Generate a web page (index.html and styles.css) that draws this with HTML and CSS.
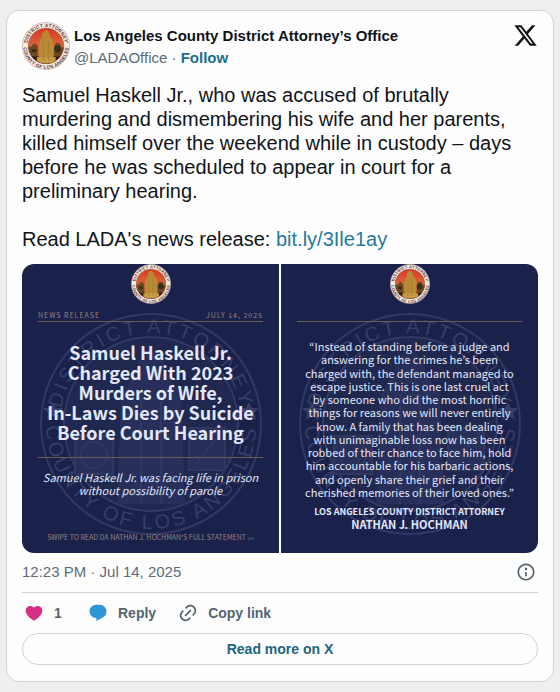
FILE: index.html
```
<!DOCTYPE html>
<html lang="en">
<head>
  <meta charset="UTF-8" />
  <meta name="viewport" content="width=device-width, initial-scale=1.0"/>
  <title>LADAOffice on X</title>
  <link rel="stylesheet" href="styles.css">
</head>
<body>
  <!-- shared seal artwork -->
  <svg class="defs" aria-hidden="true">
    <defs>
      <path id="arc-top" d="M21 100 A79 79 0 0 1 179 100"/>
      <path id="arc-bottom" d="M5 100 A95 95 0 0 0 195 100"/>
      <path id="mark-top" d="M9 100 A91 91 0 0 1 191 100"/>
      <path id="mark-bottom" d="M-5 100 A105 105 0 0 0 205 100"/>
      <linearGradient id="sky" x1="0" y1="0" x2="0" y2="1">
        <stop offset="0" stop-color="#d93a26"/>
        <stop offset="0.5" stop-color="#d9653a"/>
        <stop offset="1" stop-color="#a5622c"/>
      </linearGradient>
      <clipPath id="disc"><circle cx="100" cy="100" r="74"/></clipPath>
      <symbol id="seal" viewBox="0 0 200 200">
        <circle cx="100" cy="100" r="98" fill="#f4ece6" stroke="#c9aa9a" stroke-width="3"/>
        <circle cx="100" cy="100" r="74" fill="url(#sky)"/>
        <g clip-path="url(#disc)">
          <path d="M22 108 L40 100 L52 88 L66 100 L66 152 L22 152Z M134 152 V102 L142 88 L158 90 L164 104 L180 108 V152Z" fill="#6b4a22"/>
          <path d="M20 144 H180 V180 H20Z" fill="#33180f"/>
          <circle cx="148" cy="112" r="14" fill="#3b2b1b"/>
          <path d="M40 112 h20 v14 h-20z" fill="#3f2e18"/>
          <path d="M84 54 Q88 34 100 34 Q112 34 114 54 L118 64 L128 72 L132 104 L128 170 H72 L70 104 L76 72 L84 64Z" fill="#b98a36"/>
          <path d="M62 146 H140 V176 H62Z" fill="#c59b45"/>
          <path d="M90 78 V160 M110 78 V160" stroke="#a87d30" stroke-width="4"/>
        </g>
        <circle cx="100" cy="100" r="74" fill="none" stroke="#7d3a26" stroke-width="2"/>
        <g class="seal-text">
          <text><textPath href="#arc-top" startOffset="50%">DISTRICT ATTORNEY</textPath></text>
          <text><textPath href="#arc-bottom" startOffset="50%">COUNTY OF LOS ANGELES</textPath></text>
        </g>
        <path d="M9 80 l6 3 -5 5z M191 80 l-6 3 5 5z" fill="#b5492f"/>
      </symbol>
      <symbol id="watermark" viewBox="-12 -12 224 224">
        <g fill="none" stroke="#313964" stroke-width="2">
          <circle cx="100" cy="100" r="110"/>
          <circle cx="100" cy="100" r="87" fill="#20284f"/>
        </g>
        <g fill="#272f5a">
          <path d="M84 50 Q88 28 100 28 Q112 28 116 50 L130 70 L134 180 H66 L70 70Z"/>
          <path d="M24 112 H62 V150 H24Z M138 104 H174 V146 H138Z"/>
        </g>
        <g fill="none" stroke="#303862" stroke-width="2">
          <circle cx="43" cy="131" r="13"/>
          <path d="M24 112 H62 V150 H24Z M138 104 H174 V146 H138Z M142 144 L170 108 M90 70 V180 M110 70 V180"/>
        </g>
        <g class="mark-text">
          <text><textPath href="#mark-top" startOffset="50%">DISTRICT ATTORNEY</textPath></text>
          <text><textPath href="#mark-bottom" startOffset="50%">COUNTY OF LOS ANGELES</textPath></text>
        </g>
        <path d="M2 78 l3 6 7 0 -5 5 2 7 -7 -4 -6 4 1 -7 -5 -5 7 0z M198 78 l3 6 7 0 -5 5 2 7 -7 -4 -6 4 1 -7 -5 -5 7 0z" fill="#363e69"/>
      </symbol>
    </defs>
  </svg>

  <article class="tweet">
    <header class="tweet-header">
      <svg class="avatar" role="img" aria-label="District Attorney seal"><use href="#seal"/></svg>
      <div class="author">
        <a class="name" href="#">Los Angeles County District Attorney’s Office</a>
        <div class="handle"><a href="#">@LADAOffice</a> · <a class="follow" href="#">Follow</a></div>
      </div>
      <a class="x-logo" href="#" aria-label="View on X">
        <svg viewBox="0 0 24 24"><path d="M18.244 2.25h3.308l-7.227 8.26 8.502 11.24H16.17l-5.214-6.817L4.99 21.75H1.68l7.73-8.835L1.254 2.25H8.08l4.713 6.231zm-1.161 17.52h1.833L7.084 4.126H5.117z"/></svg>
      </a>
    </header>

    <p class="text">Samuel Haskell Jr., who was accused of brutally murdering and dismembering his wife and her parents, killed himself over the weekend while in custody – days before he was scheduled to appear in court for a preliminary hearing.</p>
    <p class="text">Read LADA's news release: <a href="#">bit.ly/3Ile1ay</a></p>

    <div class="media">
      <section class="poster">
        <svg class="watermark" aria-hidden="true"><use href="#watermark"/></svg>
        <svg class="poster-seal" aria-hidden="true"><use href="#seal"/></svg>
        <div class="kicker"><span>NEWS RELEASE</span><span>JULY 14, 2025</span></div>
        <h2>Samuel Haskell Jr.<br>Charged With 2023<br>Murders of Wife,<br>In-Laws Dies by Suicide<br>Before Court Hearing</h2>
        <p class="summary">Samuel Haskell Jr. was facing life in prison<br>without possibility of parole</p>
        <p class="swipe">SWIPE TO READ DA NATHAN J. HOCHMAN'S FULL STATEMENT ›››</p>
      </section>
      <section class="poster">
        <svg class="watermark" aria-hidden="true"><use href="#watermark"/></svg>
        <svg class="poster-seal" aria-hidden="true"><use href="#seal"/></svg>
        <div class="kicker"></div>
        <blockquote>
          <span>“Instead of standing before a judge and</span>
          <span>answering for the crimes he’s been</span>
          <span>charged with, the defendant managed to</span>
          <span>escape justice. This is one last cruel act</span>
          <span>by someone who did the most horrific</span>
          <span>things for reasons we will never entirely</span>
          <span>know. A family that has been dealing</span>
          <span>with unimaginable loss now has been</span>
          <span>robbed of their chance to face him, hold</span>
          <span>him accountable for his barbaric actions,</span>
          <span>and openly share their grief and their</span>
          <span>cherished memories of their loved ones.”</span>
        </blockquote>
        <p class="office">LOS ANGELES COUNTY DISTRICT ATTORNEY</p>
        <p class="signer">NATHAN J. HOCHMAN</p>
      </section>
    </div>

    <div class="meta">
      <a href="#">12:23 PM · Jul 14, 2025</a>
      <a class="info" href="#" aria-label="X Ads info and privacy">
        <svg viewBox="0 0 24 24"><path d="M13.5 8.5c0 .83-.67 1.5-1.5 1.5s-1.5-.67-1.5-1.5S11.17 7 12 7s1.5.67 1.5 1.5zM13 17v-5h-2v5h2zm-1 5.25c5.66 0 10.25-4.59 10.25-10.25S17.66 1.75 12 1.75 1.75 6.34 1.75 12 6.34 22.25 12 22.25zM20.25 12c0 4.56-3.69 8.25-8.25 8.25S3.75 16.56 3.75 12 7.44 3.75 12 3.75s8.25 3.69 8.25 8.25z"/></svg>
      </a>
    </div>

    <div class="actions">
      <button class="like" aria-label="Like, 1">
        <svg viewBox="0 0 24 24"><path d="M20.884 13.19c-1.351 2.48-4.001 5.12-8.379 7.67l-.503.3-.504-.3c-4.379-2.55-7.029-5.19-8.382-7.67-1.36-2.5-1.41-4.86-.514-6.67.887-1.79 2.647-2.91 4.601-3.01 1.651-.09 3.368.56 4.798 2.01 1.429-1.45 3.146-2.1 4.796-2.01 1.954.1 3.714 1.22 4.601 3.01.896 1.81.846 4.17-.514 6.67z"/></svg>
        <span class="count">1</span>
      </button>
      <button class="reply">
        <svg viewBox="0 0 24 24"><path d="M1.751 10c0-4.42 3.584-8 8.005-8h4.366c4.49 0 8.129 3.64 8.129 8.13 0 2.96-1.607 5.68-4.196 7.11l-8.054 4.46v-3.69h-.067c-4.49.1-8.183-3.51-8.183-8.01z"/></svg>
        <span>Reply</span>
      </button>
      <button class="copy">
        <svg viewBox="0 0 24 24"><path d="M18.36 5.64c-1.95-1.96-5.11-1.96-7.07 0L9.88 7.05 8.46 5.64l1.42-1.42c2.73-2.73 7.16-2.73 9.9 0 2.73 2.74 2.73 7.17 0 9.9l-1.42 1.42-1.41-1.42 1.41-1.41c1.96-1.96 1.96-5.12 0-7.07zm-2.12 3.53l-7.07 7.07-1.41-1.41 7.07-7.07 1.41 1.41zm-12.02.71l1.42-1.42 1.41 1.42-1.41 1.41c-1.96 1.96-1.96 5.12 0 7.07 1.95 1.96 5.11 1.96 7.07 0l1.41-1.41 1.42 1.41-1.42 1.42c-2.73 2.73-7.16 2.73-9.9 0-2.73-2.74-2.73-7.17 0-9.9z"/></svg>
        <span>Copy link</span>
      </button>
    </div>

    <a class="read-more" href="#">Read more on X</a>
  </article>
</body>
</html>
```
FILE: styles.css
```
* {
  box-sizing: border-box;
}

body {
  margin: 0;
  padding: 10px 6px;
  font-family: "Liberation Sans", Arial, sans-serif;
  background: #efefef;
  color: #0f1419;
}

a {
  color: inherit;
  text-decoration: none;
}

p, h2, blockquote {
  margin: 0;
}

.defs {
  position: absolute;
  width: 0;
  height: 0;
}

.tweet {
  background: #fefefe;
  border: 1px solid #cdd3d6;
  border-radius: 13px;
  padding: 11px 15px 16px;
}

/* header */
.tweet-header {
  display: flex;
  align-items: flex-start;
  margin-bottom: 13px;
}

.avatar {
  width: 48px;
  height: 48px;
  margin-right: 4px;
}

.author {
  flex: 1;
  padding-top: 4px;
  font-size: 15px;
  line-height: 20px;
}

.name {
  display: block;
  font-weight: bold;
}

.handle {
  margin-top: 2px;
  color: #5b6b77;
}

.follow {
  color: #1a6f8c;
  font-weight: bold;
}

.x-logo svg {
  display: block;
  width: 25px;
  height: 25px;
  margin-top: 1px;
  fill: #0f1419;
}

.text {
  font-size: 20px;
  line-height: 24px;
}

.text + .text {
  margin-top: 24px;
}

.text a {
  color: #247a9c;
}

/* media */
.media {
  display: flex;
  gap: 2px;
  margin-top: 13px;
  border-radius: 12px;
  overflow: hidden;
}

.poster {
  position: relative;
  display: flex;
  flex-direction: column;
  flex: 1;
  padding: 0 16px 11px;
  background: #1a214b;
  color: #e3e8fb;
  font-family: "Noto Sans CJK JP", "Noto Sans", sans-serif;
  font-variant-east-asian: proportional-width;
  text-align: center;
  white-space: nowrap;
}

.poster > * {
  position: relative;
}

.poster .watermark {
  position: absolute;
  top: 48px;
  left: 50%;
  width: 224px;
  height: 224px;
  margin-left: -112px;
}

.poster-seal {
  align-self: center;
  width: 40px;
  height: 40px;
}

.kicker {
  display: flex;
  justify-content: space-between;
  height: 18px;
  padding-top: 6px;
  border-bottom: 1px solid #6f5a58;
  color: #9a8480;
  font-size: 7px;
  line-height: 10px;
  letter-spacing: 1px;
}

.poster h2 {
  margin-top: 20px;
  font-size: 18px;
  line-height: 20px;
}

.summary {
  margin-top: 15px;
  padding-top: 13px;
  border-top: 1px solid #6f5a58;
  font-size: 11px;
  font-style: italic;
  line-height: 13px;
}

.swipe {
  margin-top: auto;
  color: #9a8480;
  font-size: 7px;
  line-height: 10px;
}

.poster blockquote {
  display: flex;
  flex-direction: column;
  justify-content: space-between;
  height: 159px;
  margin-top: 18px;
  font-size: 11px;
  line-height: 13px;
}

.office, .signer {
  font-weight: bold;
  line-height: 13px;
}

.office {
  margin-top: 6px;
  font-size: 9px;
}

.signer {
  margin-bottom: 11px;
  font-size: 11px;
}

.seal-text text {
  fill: #5c3a35;
  font: bold 20px "Liberation Sans", Arial, sans-serif;
  letter-spacing: 1px;
  text-anchor: middle;
}

.mark-text text {
  fill: #363e69;
  font: 20px "Liberation Sans", Arial, sans-serif;
  letter-spacing: 3px;
  text-anchor: middle;
}

/* footer */
.meta {
  display: flex;
  justify-content: space-between;
  align-items: center;
  height: 40px;
  padding-bottom: 2px;
  border-bottom: 1px solid #cdd3d6;
  color: #5b6b77;
  font-size: 15px;
}

.info svg {
  display: block;
  width: 20px;
  height: 20px;
  margin-right: 2px;
  fill: #536471;
}

.actions {
  display: flex;
  gap: 22px;
  padding: 10px 2px;
}

.actions button {
  display: flex;
  align-items: center;
  gap: 10px;
  padding: 0;
  border: none;
  background: none;
  color: #536471;
  font: bold 14px "Liberation Sans", Arial, sans-serif;
  cursor: pointer;
}

.actions svg {
  width: 20px;
  height: 20px;
  fill: #536471;
}

.actions .like svg {
  fill: #d62e85;
}

.actions .reply svg {
  fill: #2f96d6;
}

.count {
  min-width: 12px;
  text-align: left;
}

.read-more {
  display: block;
  border: 1px solid #cdd3d6;
  border-radius: 16px;
  color: #1a6480;
  font-size: 14px;
  font-weight: bold;
  line-height: 30px;
  text-align: center;
}
```
